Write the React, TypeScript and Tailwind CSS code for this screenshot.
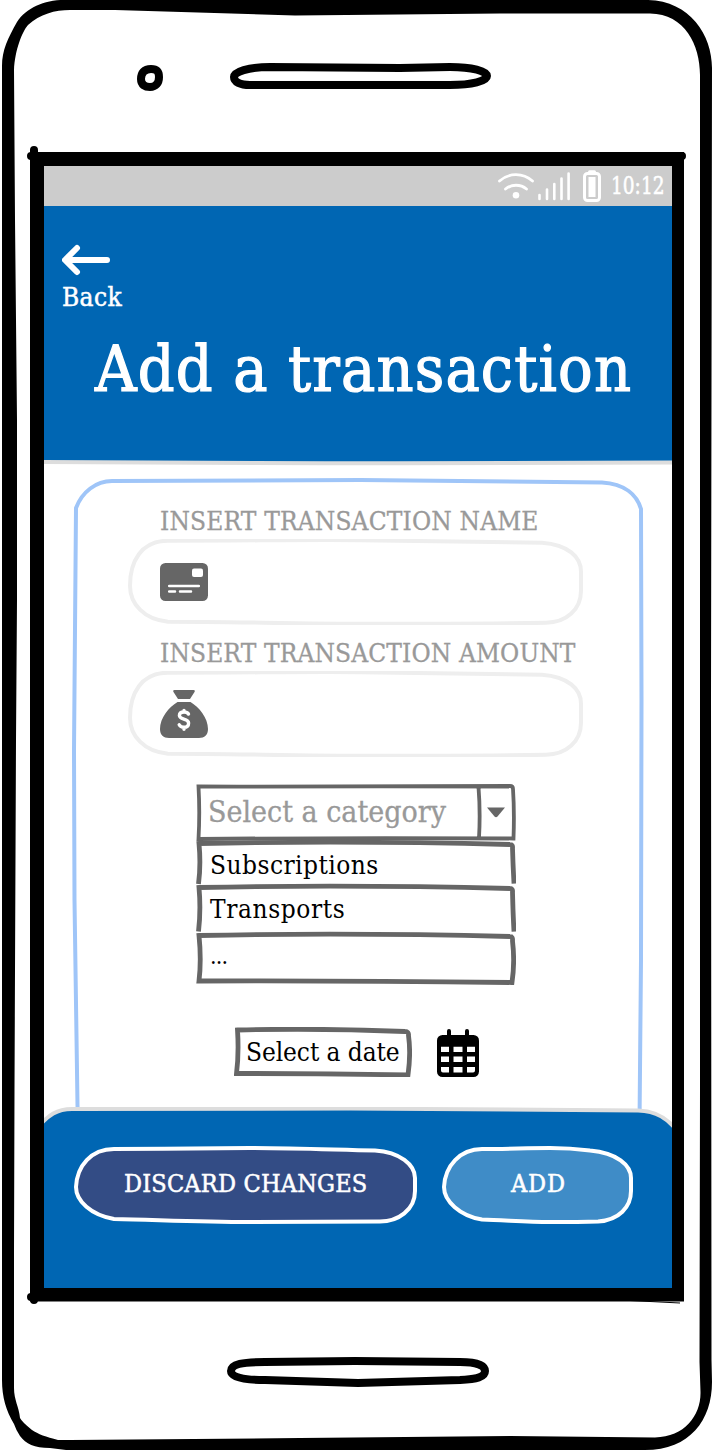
import type { ReactNode } from "react";

function PhoneFrame() {
  return (
    <svg className="absolute inset-0" width="712" height="1450" viewBox="0 0 712 1450" aria-hidden="true">
      <path
        fillRule="evenodd"
        d="M2 66C2 50 8 38 17 22C26 8 44 0 64 0L648 0C690 1 712 35 712 68L711 700L711.500 1360L712 1382C712 1420 690 1450 645 1450L66 1450L50 1448C34 1448 26 1444 20 1436Q16 1430 14 1424C6 1411 2 1397 2 1380ZM14 70C15 50 22 32 28 25C40 14 55 10 70 10L115 10L295 15.500L500 13.500L650 13.500C685 14 700 45 700 75L700 1090L699.500 1362L700.500 1392C701 1415 685 1437 655 1437.500L510 1436L300 1438L70 1440L58 1440C46 1437 38 1434 32 1430Q22 1422 20 1418C19 1407 14 1400 14 1388L14 1250L14.500 1090L16 740L17 600L17 420L15 220Z"
      />
      <path d="M30 152H684V1301.500H30ZM44 166V1288H672V166Z" fillRule="evenodd" />
      <path d="M34 150V1300M31 156H682M31 1297H60" fill="none" stroke="#000" strokeWidth="8" strokeLinecap="round" />
      <path d="M600 1299L680 1303" stroke="#000" strokeWidth="1" />
      <path d="M151 69C144 69 141 73 141 79C141 85 145 87 150 87C156 87 159 83 159 77C159 72 157 69 151 69Z" fill="none" stroke="#000" strokeWidth="8" />
      <path d="M270 67L400 68L450 67C472 67 487 71 487 76C487 81 472 85 450 85H250C240 85 234 82 234 77C234 72 248 67 270 67Z" fill="none" stroke="#000" strokeWidth="8" />
      <path d="M265 1362L355 1361L460 1362C477 1362 485 1366 485 1371C485 1377 477 1379 460 1380L358 1383L265 1380C243 1380 231 1377 231 1371C231 1364 243 1362 265 1362Z" fill="none" stroke="#000" strokeWidth="8" />
    </svg>
  );
}

function StatusIcons() {
  return (
    <svg className="shrink-0" width="108" height="40" viewBox="496 166 108 40" fill="none" stroke="#fff" strokeLinecap="round" aria-hidden="true">
      <path d="M499.500 181C509 172.500 523 172.500 532.500 181M505.500 189C511.500 184 520.500 184 526.500 189" strokeWidth="2.800" />
      <circle cx="516" cy="195.300" r="3.300" fill="#fff" stroke="none" />
      <path d="M539.500 195V199M547 189.500V199M554.300 184V199M561.500 178.500V199M568.600 173.500V199" strokeWidth="2.600" />
      <rect x="584.500" y="173.500" width="15" height="27" rx="3" strokeWidth="3" />
      <rect x="588.500" y="177" width="7" height="20" fill="#fff" stroke="none" />
      <path d="M589.500 171.700H594.500" strokeWidth="3" />
    </svg>
  );
}

function InputField({ icon }: { icon: ReactNode }) {
  return (
    <div className="relative ml-[56px] flex h-[86px] w-[456px] items-center pl-8">
      <svg className="absolute inset-0" width="456" height="86" viewBox="128 539.3 456 86" fill="none" aria-hidden="true">
        <path d="M168 541C250 541 300 540 360 540.500C430 541 490 542 542 543C568 545 581 557 581 572V591C581 610 566 623 546 623C480 624 430 624 370 624C300 624 230 622 168 622C144 620 130 604 130 586C130 562 141 541 168 541Z" stroke="#eee" strokeWidth="4" />
      </svg>
      {icon}
    </div>
  );
}

function CardIcon() {
  return (
    <svg width="48" height="38" viewBox="0 0 48 38" aria-hidden="true">
      <rect width="48" height="38" rx="5.500" fill="#666" />
      <rect x="32" y="5.500" width="11" height="8.500" rx="2" fill="#fff" />
      <path d="M9.200 23H38.800M9.200 28.500H15M20 28.500H31" stroke="#fff" strokeWidth="2.500" strokeLinecap="round" />
    </svg>
  );
}

function MoneyBagIcon() {
  return (
    <svg width="48" height="48" viewBox="0 0 48 48" aria-hidden="true">
      <path d="M14.500 0H33.500Q35.500 0 34.500 2L30 9H18L13.500 2Q12.500 0 14.500 0ZM17.500 12H30.500C39 17 48 28 48 39C48 45 44.500 48 39 48H9C3.500 48 0 45 0 39C0 28 9 17 17.500 12Z" fill="#666" />
      <path d="M28.500 24C27.500 22.500 26 22 24 22C21 22 19.400 23.300 19.400 25.500C19.400 30 28.600 28 28.600 33C28.600 36 26.500 37.300 24 37.300C21.500 37.300 20 36.300 19.200 34.800M24 20.500V22M24 37.500V39.300" fill="none" stroke="#fff" strokeWidth="3.400" strokeLinecap="round" />
    </svg>
  );
}

function CalendarIcon() {
  return (
    <svg width="42" height="48" viewBox="0 0 42 48" aria-hidden="true">
      <path d="M12 2V10M30 2V10" stroke="#000" strokeWidth="4" strokeLinecap="round" />
      <rect y="6" width="42" height="42" rx="5.500" />
      <path d="M4 17.700H12V23H4ZM16.500 17.700H25.500V23H16.500ZM30 17.700H38V23H30ZM4 27.500H12V33H4ZM16.500 27.500H25.500V33H16.500ZM30 27.500H38V33H30ZM4 38H12V43.500H6Q4 43.500 4 41.500ZM16.500 38H25.500V43.500H16.500ZM30 38H38V41.500Q38 43.500 36 43.500H30Z" fill="#fff" />
    </svg>
  );
}

function CategorySelect() {
  return (
    <div className="relative ml-[124px] mt-[26px] h-[202px] w-[320px]">
      <svg className="absolute inset-0" width="320" height="202" viewBox="196 783 320 202" fill="none" stroke="#666" aria-hidden="true">
        <path d="M198.500 786.500C300 787 400 786 510 786Q513 786 513 789Q514.500 812 513.500 838.500Q350 837.500 198.500 839Q200 812 198.500 786.500ZM478.500 787Q480.500 812 479 838" strokeWidth="3.800" />
        <path d="M198.500 884Q201 865 199 843.500Q350 840.500 510 844.500Q513 844.500 512.500 848Q513 866 514 883.500M198.500 931.500Q201 910 199 887.500Q350 884.500 510 888.500Q513 888.500 512.500 892Q513 914 514 931.500" strokeWidth="4.800" />
        <path d="M199 981Q201.500 960 199 935.500Q350 932.500 510 936.500Q513 936.500 512.500 941Q515 962 512 982.500Q350 980.500 199 981Z" strokeWidth="4.800" />
        <path d="M487 807.500H505L497.500 816.500Q496 818 494.500 816.500Z" fill="#666" stroke="none" />
      </svg>
      <div className="relative flex h-[56px] items-center pl-[12px] text-[30px] text-[#999]">
        <span className="whitespace-nowrap [-webkit-text-stroke:0.3px_#999]">Select a category</span>
      </div>
      <ul className="relative text-[26px] text-black">
        <li className="flex h-[52px] items-center pl-[14px]"><span className="whitespace-nowrap tracking-[0.46px]">Subscriptions</span></li>
        <li className="flex h-[36px] items-center pl-[14px]"><span className="whitespace-nowrap tracking-[0.6px]">Transports</span></li>
        <li className="flex h-[58px] items-center pl-[14px]"><span className="whitespace-nowrap text-[23px] tracking-[-0.8px]">...</span></li>
      </ul>
    </div>
  );
}

export default function App() {
  return (
    <main className="relative h-[1450px] w-[712px] overflow-hidden bg-white px-[44px] pb-[162px] pt-[166px] font-['Roboto_Slab','DejaVu_Serif_Condensed','DejaVu_Serif',serif]">
      <PhoneFrame />
      <div className="relative flex h-[1122px] w-[628px] flex-col overflow-hidden">
        <div className="flex h-10 shrink-0 items-center bg-[#ccc] pl-[452px] text-white">
          <StatusIcons />
          <span className="ml-[7px] w-[52px] origin-left scale-x-[0.86] whitespace-nowrap text-[24px] [-webkit-text-stroke:0.5px_#fff]">10:12</span>
        </div>
        <header className="relative h-[258px] shrink-0 bg-[#0066b3] pt-[38px] text-white">
          <button className="ml-[18px] flex flex-col items-start">
            <svg width="48" height="32" viewBox="0 0 48 32" fill="none" stroke="#fff" strokeWidth="6" strokeLinecap="round" strokeLinejoin="round" aria-hidden="true">
              <path d="M45 16H4M15 4L3 16L15 28" />
              <path d="M4 16L10 11V21Z" fill="#fff" stroke="none" />
            </svg>
            <span className="whitespace-nowrap text-[26px] leading-[42px] tracking-[0.4px] [-webkit-text-stroke:0.5px_#fff]">Back</span>
          </button>
          <h1 className="ml-[51px] mt-[10px] w-[540px] whitespace-nowrap text-[64px] leading-[82px] tracking-[1.15px] [-webkit-text-stroke:1.2px_#fff]">Add a transaction</h1>
          <svg className="absolute bottom-[-2px] left-0" width="628" height="6" viewBox="0 0 628 6" aria-hidden="true">
            <path d="M0 2Q300 4 628 2.500" fill="none" stroke="#ddd" strokeWidth="4" />
          </svg>
        </header>
        <section className="relative ml-[28px] h-[643px] w-[572px] shrink-0 pt-[43px]">
          <svg className="absolute inset-0" width="572" height="660" viewBox="72 464 572 660" fill="none" aria-hidden="true">
            <path d="M78 1124L77.500 1105L74.500 900L74 750L76 508C82 492 96 481 112 481L360 480L602 482.500C625 484 637 495 641 509L641.500 700L641 960L639.500 1124" stroke="#9fc5f8" strokeWidth="4" />
          </svg>
          <label className="relative ml-[88px] block h-[32px] text-[26px] leading-[28px] text-[#999]"><span className="inline-block whitespace-nowrap tracking-[0.17px] [-webkit-text-stroke:0.3px_#999]">INSERT TRANSACTION NAME</span></label>
          <InputField icon={<CardIcon />} />
          <label className="relative ml-[88px] mt-[14px] block h-[32px] text-[26px] leading-[28px] text-[#999]"><span className="inline-block whitespace-nowrap tracking-[0.14px] [-webkit-text-stroke:0.3px_#999]">INSERT TRANSACTION AMOUNT</span></label>
          <InputField icon={<MoneyBagIcon />} />
          <CategorySelect />
          <div className="ml-[162px] mt-[42px] flex items-center">
            <button className="relative flex h-[50px] w-[178px] items-center pl-[12px] text-[26px]">
              <svg className="absolute inset-0" width="178" height="50" viewBox="234 1027.500 178 50" fill="none" aria-hidden="true">
                <path d="M237.500 1030.500Q320 1028.500 405 1032Q409 1032 408.500 1036Q411 1054 408 1075.500Q320 1074 236.500 1074Q239 1054 237.500 1030.500Z" stroke="#666" strokeWidth="4.800" />
              </svg>
              <span className="relative whitespace-nowrap tracking-[-0.08px]">Select a date</span>
            </button>
            <div className="ml-[25px] pt-[2px]"><CalendarIcon /></div>
          </div>
        </section>
        <footer className="relative h-[181px] shrink-0">
          <svg className="absolute inset-0" width="628" height="181" viewBox="44 1107 628 181" aria-hidden="true">
            <path d="M36 1130C48 1114 58 1109 72 1109L350 1108.500L638 1110.500C656 1111 668 1118 678 1132V1294H36Z" fill="#0066b3" stroke="#ddd" strokeWidth="4" />
          </svg>
          <div className="flex pl-[30px] pt-[39px] text-[25px] text-white">
            <button className="relative flex h-[78px] w-[344px] items-center pb-[3px] pl-[50px]">
              <svg className="absolute inset-0" width="344" height="78" viewBox="74 1146 344 78" aria-hidden="true">
                <path d="M114 1149C160 1149 200 1148 250 1148C300 1148 340 1150 375 1150.500C400 1152 415 1165 415 1178V1191C415 1210 398 1221.500 380 1221.500L250 1222C200 1222 160 1220 114 1219C91 1215 76 1201 76 1187C77 1166 91 1149 114 1149Z" fill="#334c85" stroke="#fff" strokeWidth="4" />
              </svg>
              <span className="relative whitespace-nowrap tracking-[0.2px] [-webkit-text-stroke:0.5px_#fff]">DISCARD CHANGES</span>
            </button>
            <button className="relative ml-[24px] flex h-[78px] w-[192px] items-center pb-[3px] pl-[69px]">
              <svg className="absolute inset-0" width="192" height="78" viewBox="442 1146 192 78" aria-hidden="true">
                <path d="M482 1149C510 1149 525 1148 550 1148C567 1148 578 1149 590 1150.500C617 1153 631 1165 631 1178V1191C631 1207 619 1220 598 1221.500C580 1222 567 1222 550 1222C526 1222 504 1220 482 1219.500C460 1216 444 1201 444 1187C445 1166 460 1149 482 1149Z" fill="#3f8cc7" stroke="#fff" strokeWidth="4" />
              </svg>
              <span className="relative whitespace-nowrap tracking-[0.8px] [-webkit-text-stroke:0.5px_#fff]">ADD</span>
            </button>
          </div>
        </footer>
      </div>
    </main>
  );
}
